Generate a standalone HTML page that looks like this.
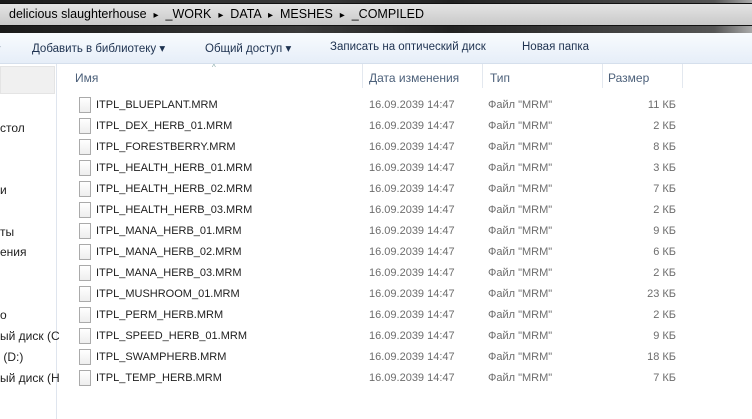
<!DOCTYPE html>
<html><head><meta charset="utf-8"><style>
*{margin:0;padding:0;box-sizing:border-box}
body{width:752px;height:419px;overflow:hidden;background:#fff;font-family:"Liberation Sans","DejaVu Sans",sans-serif;font-size:12px;color:#1e1e1e;position:relative}
.top{position:absolute;left:0;top:0;width:752px;height:33px;background:linear-gradient(90deg,#1a1a1a,#3a3a3a 40%,#222 60%,#555 95%,#aaa)}
.addr{position:absolute;left:0;top:3px;width:752px;height:23px;background:linear-gradient(#e4e4e4,#c9c9c9);border-top:1px solid #111;border-bottom:1px solid #111;font-size:12.5px;line-height:21px;padding-left:9px;color:#000;white-space:nowrap}
.addr b{font-weight:normal;font-size:10px}
.tb{position:absolute;left:0;top:33px;width:752px;height:31px;background:linear-gradient(#f8fbfe,#e6eef8);border-bottom:1px solid #d5dfec}
.tb span{position:absolute;top:8px;font-size:11.5px;color:#1e3250}
.nav{position:absolute;left:0;top:64px;width:57px;height:355px;border-right:1px solid #dfe5ee;background:#fff}
.nav div{position:absolute;left:0;font-size:12px;white-space:nowrap}
.hd{position:absolute;top:64px;height:25px;left:58px;width:694px}
.hd span{position:absolute;top:7px;color:#4c607a}
.sep{position:absolute;top:64px;width:1px;height:24px;background:#e3e8ef}
.row{position:absolute;left:0;width:752px;height:21px;white-space:nowrap;font-size:11px}
.row span{position:absolute;top:5px}
.ic{position:absolute;left:79px;top:3px;width:12px;height:16px;border:1px solid #aaa;background:linear-gradient(#fff,#eee)}
.c{color:#6d6d6d}
</style></head><body>
<div class="top"></div>
<div class="addr">delicious slaughterhouse &nbsp;<b>▸</b> &nbsp;_WORK &nbsp;<b>▸</b> &nbsp;DATA &nbsp;<b>▸</b> &nbsp;MESHES &nbsp;<b>▸</b> &nbsp;_COMPILED</div>
<div class="tb">
<span style="left:-4px;font-size:9px;top:10px">▾</span>
<span style="left:32px">Добавить в библиотеку ▾</span>
<span style="left:205px">Общий доступ ▾</span>
<span style="left:330px">Записать на оптический диск</span>
<span style="left:522px">Новая папка</span>
</div>
<div class="nav">
<div style="top:2px;width:55px;height:28px;background:#f0f0f0;border:1px solid #e4e4e4"></div>
<div style="top:57px">стол</div>
<div style="top:119px">и</div>
<div style="top:161px">ты</div>
<div style="top:181px">ения</div>
<div style="top:244px">о</div>
<div style="top:265px">ый диск (C</div>
<div style="top:286px">&nbsp;(D:)</div>
<div style="top:307px">ый диск (H</div>
</div>
<div style="position:absolute;left:212px;top:63px;font-size:8px;color:#8aa">^</div>
<div class="hd"><span style="left:17px">Имя</span><span style="left:311px">Дата изменения</span><span style="left:432px">Тип</span><span style="left:550px">Размер</span></div>
<div class="sep" style="left:362px"></div><div class="sep" style="left:482px"></div><div class="sep" style="left:602px"></div><div class="sep" style="left:682px"></div>
<div class="row" style="top:94px"><div class="ic"></div><span style="left:96px">ITPL_BLUEPLANT.MRM</span><span class="c" style="left:369px">16.09.2039 14:47</span><span class="c" style="left:488px">Файл "MRM"</span><span class="c" style="right:76px">11 КБ</span></div>
<div class="row" style="top:115px"><div class="ic"></div><span style="left:96px">ITPL_DEX_HERB_01.MRM</span><span class="c" style="left:369px">16.09.2039 14:47</span><span class="c" style="left:488px">Файл "MRM"</span><span class="c" style="right:76px">2 КБ</span></div>
<div class="row" style="top:136px"><div class="ic"></div><span style="left:96px">ITPL_FORESTBERRY.MRM</span><span class="c" style="left:369px">16.09.2039 14:47</span><span class="c" style="left:488px">Файл "MRM"</span><span class="c" style="right:76px">8 КБ</span></div>
<div class="row" style="top:157px"><div class="ic"></div><span style="left:96px">ITPL_HEALTH_HERB_01.MRM</span><span class="c" style="left:369px">16.09.2039 14:47</span><span class="c" style="left:488px">Файл "MRM"</span><span class="c" style="right:76px">3 КБ</span></div>
<div class="row" style="top:178px"><div class="ic"></div><span style="left:96px">ITPL_HEALTH_HERB_02.MRM</span><span class="c" style="left:369px">16.09.2039 14:47</span><span class="c" style="left:488px">Файл "MRM"</span><span class="c" style="right:76px">7 КБ</span></div>
<div class="row" style="top:199px"><div class="ic"></div><span style="left:96px">ITPL_HEALTH_HERB_03.MRM</span><span class="c" style="left:369px">16.09.2039 14:47</span><span class="c" style="left:488px">Файл "MRM"</span><span class="c" style="right:76px">2 КБ</span></div>
<div class="row" style="top:220px"><div class="ic"></div><span style="left:96px">ITPL_MANA_HERB_01.MRM</span><span class="c" style="left:369px">16.09.2039 14:47</span><span class="c" style="left:488px">Файл "MRM"</span><span class="c" style="right:76px">9 КБ</span></div>
<div class="row" style="top:241px"><div class="ic"></div><span style="left:96px">ITPL_MANA_HERB_02.MRM</span><span class="c" style="left:369px">16.09.2039 14:47</span><span class="c" style="left:488px">Файл "MRM"</span><span class="c" style="right:76px">6 КБ</span></div>
<div class="row" style="top:262px"><div class="ic"></div><span style="left:96px">ITPL_MANA_HERB_03.MRM</span><span class="c" style="left:369px">16.09.2039 14:47</span><span class="c" style="left:488px">Файл "MRM"</span><span class="c" style="right:76px">2 КБ</span></div>
<div class="row" style="top:283px"><div class="ic"></div><span style="left:96px">ITPL_MUSHROOM_01.MRM</span><span class="c" style="left:369px">16.09.2039 14:47</span><span class="c" style="left:488px">Файл "MRM"</span><span class="c" style="right:76px">23 КБ</span></div>
<div class="row" style="top:304px"><div class="ic"></div><span style="left:96px">ITPL_PERM_HERB.MRM</span><span class="c" style="left:369px">16.09.2039 14:47</span><span class="c" style="left:488px">Файл "MRM"</span><span class="c" style="right:76px">2 КБ</span></div>
<div class="row" style="top:325px"><div class="ic"></div><span style="left:96px">ITPL_SPEED_HERB_01.MRM</span><span class="c" style="left:369px">16.09.2039 14:47</span><span class="c" style="left:488px">Файл "MRM"</span><span class="c" style="right:76px">9 КБ</span></div>
<div class="row" style="top:346px"><div class="ic"></div><span style="left:96px">ITPL_SWAMPHERB.MRM</span><span class="c" style="left:369px">16.09.2039 14:47</span><span class="c" style="left:488px">Файл "MRM"</span><span class="c" style="right:76px">18 КБ</span></div>
<div class="row" style="top:367px"><div class="ic"></div><span style="left:96px">ITPL_TEMP_HERB.MRM</span><span class="c" style="left:369px">16.09.2039 14:47</span><span class="c" style="left:488px">Файл "MRM"</span><span class="c" style="right:76px">7 КБ</span></div>
</body></html>
